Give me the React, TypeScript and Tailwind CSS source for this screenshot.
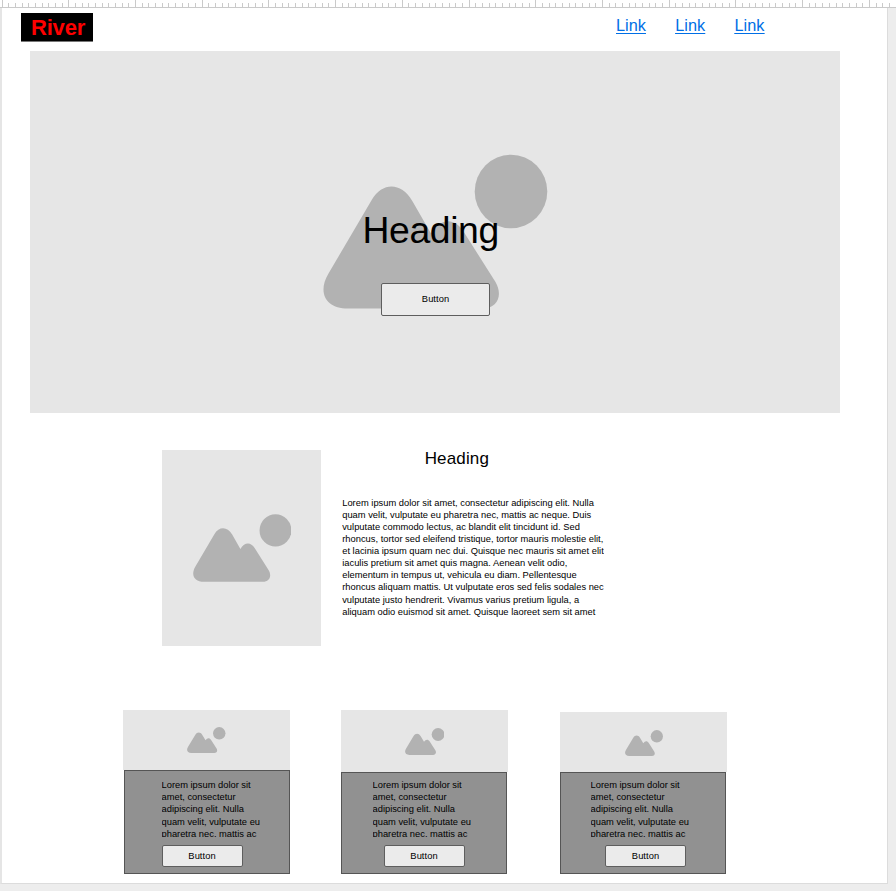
import React from "react";

function Ruler() {
  const ticks = Array.from({ length: 135 }, (_, i) => i);
  return (
    <svg className="block h-2 w-[896px] shrink-0 bg-white" viewBox="0 0 896 8" shapeRendering="crispEdges">
      {ticks.map((i) => (
        <rect key={i} x={Math.floor(2 + i * 6.672)} y={i % 10 === 0 ? 0 : 3} width={1} height={i % 10 === 0 ? 7 : 4} fill="#cacaca" />
      ))}
      <rect x={0} y={7} width={896} height={1} fill="#cacaca" />
    </svg>
  );
}

function Mountains({ className }: { className: string }) {
  return (
    <svg className={className} viewBox="323 154 224.5 155" preserveAspectRatio="none" fill="#b2b2b2">
      <ellipse cx="511" cy="191.5" rx="36.3" ry="36.8" />
      <path d="M348 308.5 C326 308.5 317 293 328.5 273.5 L371.7 200 C382.5 182 401 182 412.3 201 L431 233.5 C441 217.500 454.500 217.500 463.500 231.500 L495.500 282 C503 295 498 308.500 482 308.500 Z" />
    </svg>
  );
}

function Button({ className }: { className: string }) {
  return (
    <button className={`flex shrink-0 items-center justify-center rounded-[2px] border border-[#5e5e5e] bg-[#ebebeb] text-[9.33px] leading-3 tracking-[0.05px] text-black ${className}`}>
      Button
    </button>
  );
}

const article = [
  "Lorem ipsum dolor sit amet, consectetur adipiscing elit. Nulla",
  "quam velit, vulputate eu pharetra nec, mattis ac neque. Duis",
  "vulputate commodo lectus, ac blandit elit tincidunt id. Sed",
  "rhoncus, tortor sed eleifend tristique, tortor mauris molestie elit,",
  "et lacinia ipsum quam nec dui. Quisque nec mauris sit amet elit",
  "iaculis pretium sit amet quis magna. Aenean velit odio,",
  "elementum in tempus ut, vehicula eu diam. Pellentesque",
  "rhoncus aliquam mattis. Ut vulputate eros sed felis sodales nec",
  "vulputate justo hendrerit. Vivamus varius pretium ligula, a",
  "aliquam odio euismod sit amet. Quisque laoreet sem sit amet",
];

const blurb = [
  "Lorem ipsum dolor sit",
  "amet, consectetur",
  "adipiscing elit. Nulla",
  "quam velit, vulputate eu",
  "pharetra nec, mattis ac",
];

function Lines({ lines, className }: { lines: string[]; className: string }) {
  return (
    <div className={`overflow-hidden text-[9.33px] whitespace-nowrap text-black ${className}`}>
      {lines.map((line) => (
        <p key={line}>{line}</p>
      ))}
    </div>
  );
}

type CardProps = { card: string; image: string; art: string; panel: string; text: string; button: string };

function Card({ card, image, art, panel, text, button }: CardProps) {
  return (
    <div className={`flex w-[167px] shrink-0 flex-col ${card}`}>
      <div className={`w-[167px] shrink-0 bg-[#e6e6e6] ${image}`}>
        <Mountains className={art} />
      </div>
      <div className={`flex flex-col items-start border border-[#555] bg-[#919191] ${panel}`}>
        <Lines lines={blurb} className={`h-[58px] leading-[12.2px] ${text}`} />
        <Button className={`h-[22px] w-[81px] ${button}`} />
      </div>
    </div>
  );
}

export default function App() {
  return (
    <div className="h-[891px] w-[896px] overflow-hidden bg-[#ededed] font-['Liberation_Sans',Arial,sans-serif]">
      <Ruler />
      <main className="flex h-[876px] w-[888px] flex-col border-r border-b border-l-2 border-[#dcdcdc] border-l-[#e5e5e5] bg-white">
        <header className="flex h-[43px] shrink-0 items-start pt-[5px] pl-[19px]">
          <div className="h-[29px] w-[72px] border-b border-[#777] bg-black pl-[10px] text-[22px] leading-[29px] font-bold tracking-[-0.2px] text-[#ff0000]">River</div>
          <nav className="ml-[523px] flex gap-[29.4px] pt-[2px] text-[16.3px] leading-[20px] text-[#006fe6] underline underline-offset-2">
            <a>Link</a>
            <a>Link</a>
            <a>Link</a>
          </nav>
        </header>
        <section className="ml-7 flex h-[362px] w-[810px] shrink-0 bg-[#e6e6e6]">
          <div className="grid h-full w-full">
            <Mountains className="col-start-1 row-start-1 mt-[103px] ml-[293px] h-[155px] w-[224.5px]" />
            <div className="z-10 col-start-1 row-start-1 flex flex-col items-start">
              <h1 className="mt-[158px] ml-[332.5px] text-[37.33px] leading-[43px] tracking-[-0.4px] text-black">Heading</h1>
              <Button className="mt-[31px] ml-[351px] h-[33px] w-[109px] pb-[2px]" />
            </div>
          </div>
        </section>
        <section className="mt-[37px] ml-[160px] flex h-[196px] shrink-0">
          <div className="w-[159.400px] shrink-0 bg-[#e6e6e6]">
            <Mountains className="mt-[64px] ml-[30.5px] h-[68px] w-[98.5px]" />
          </div>
          <div className="ml-[20.800px]">
            <h2 className="mt-[-1px] ml-[82.500px] text-[17px] leading-5 tracking-[0.15px] text-black">Heading</h2>
            <Lines lines={article} className="mt-[27.800px] h-[122px] leading-[12.1px] tracking-[0.012px]" />
          </div>
        </section>
        <section className="mt-[64px] ml-[121px] flex items-start">
          <Card card="" image="h-[60px] pl-[64px] pt-[17px]" art="h-[26px] w-[38.500px]" panel="ml-[1px] h-[104px] w-[166px]" text="mt-[8px] ml-[36.500px]" button="mt-[8px] ml-[36.500px]" />
          <Card card="ml-[51px]" image="h-[62px] pl-[63.500px] pt-[18px]" art="h-[27px] w-[39.500px]" panel="h-[102px] w-[166px]" text="mt-[6px] ml-[30.500px]" button="mt-[8px] ml-[41.500px]" />
          <Card card="ml-[52px] mt-[2px]" image="h-[60px] pl-[64.500px] pt-[18px]" art="h-[26px] w-[38px]" panel="h-[102px] w-[166px]" text="mt-[6px] ml-[29.500px]" button="mt-[8px] ml-[44px]" />
        </section>
      </main>
    </div>
  );
}
